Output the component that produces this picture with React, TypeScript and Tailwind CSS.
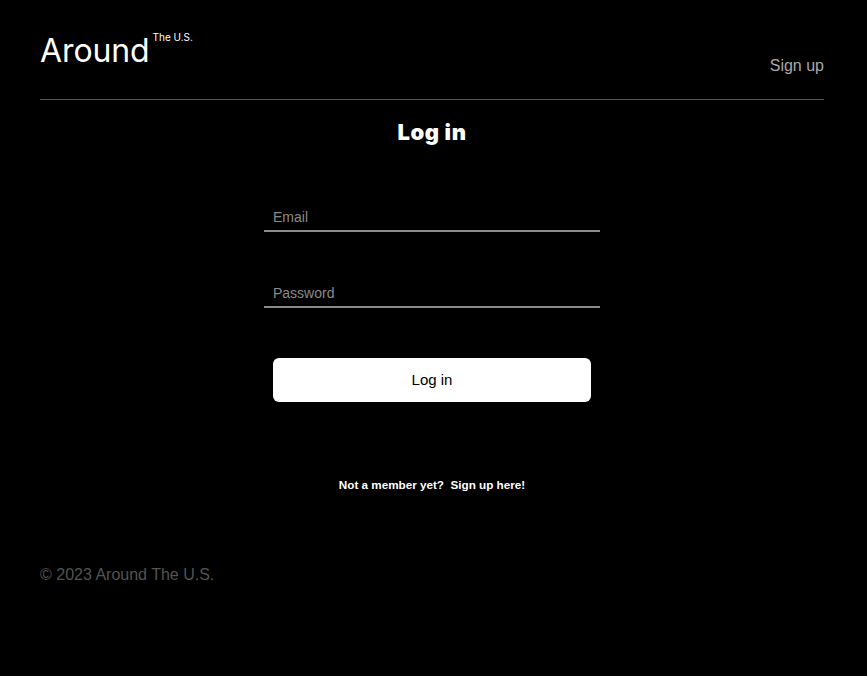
export default function App() {
  return (
    <div className="min-h-[676px] bg-black pl-[40px] pr-[43px] font-['Liberation_Sans',Arial,sans-serif] text-white">
      <header className="flex items-start justify-between border-b border-[#545454] pb-[23px] pt-[31px]">
        <div className="flex items-start">
          <span className="font-['Inter',sans-serif] text-[32px] leading-[40px] tracking-[-0.1px] text-white">
            Around
          </span>
          <span className="ml-[3px] font-['Inter',sans-serif] text-[10px] leading-[12px] text-white">
            The U.S.
          </span>
        </div>
        <a className="mt-[25px] text-[16px] leading-[20px] text-[#a9a9a9]">Sign up</a>
      </header>

      <main className="flex flex-col items-center">
        <h1 className="mt-[19px] font-['Inter',sans-serif] text-[22px] font-black leading-[26px] tracking-[0.6px]">
          Log in
        </h1>

        <form className="mt-[59px] flex w-[336px] flex-col">
          <input
            type="email"
            placeholder="Email"
            className="h-[28px] border-b-2 border-[#8a8a8a] bg-transparent pl-[9px] text-[14px] text-white outline-none placeholder:text-[#8a8a8a]"
          />
          <input
            type="password"
            placeholder="Password"
            className="mt-[48px] h-[28px] border-b-2 border-[#8a8a8a] bg-transparent pl-[9px] text-[14px] text-white outline-none placeholder:text-[#8a8a8a]"
          />
          <button
            type="button"
            className="mx-auto mt-[50px] h-[44px] w-[318px] rounded-[6px] bg-white text-[15px] text-black"
          >
            Log in
          </button>
        </form>

        <p className="mt-[76px] text-[11.7px] font-bold leading-[14px] text-white">
          Not a member yet?&nbsp; Sign up here!
        </p>
      </main>

      <footer className="mt-[73px] text-[16px] leading-[20px] text-[#545454]">© 2023 Around The U.S.</footer>
    </div>
  );
}
